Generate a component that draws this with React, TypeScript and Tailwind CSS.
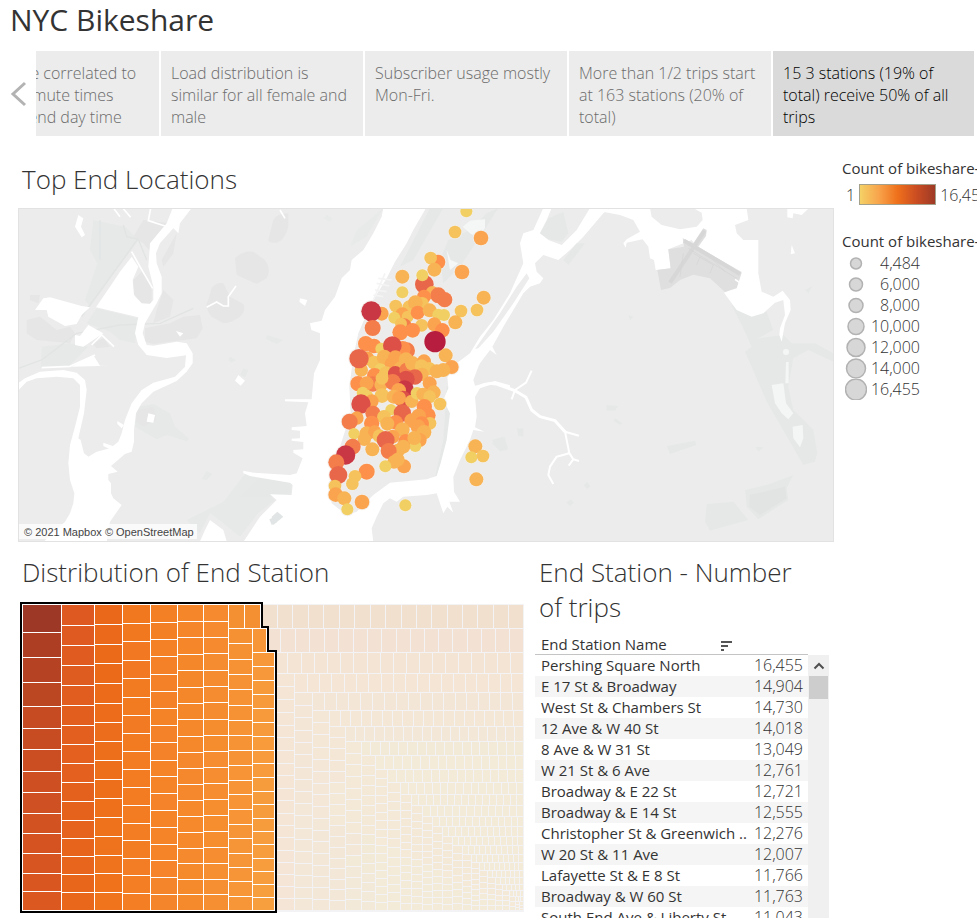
import React from "react";

type Dot = [number, number, number, string];

const Y1 = "#f1cf63";
const Y2 = "#f5c25c";
const O1 = "#f8b355";
const O2 = "#fba450";
const O3 = "#fd914c";
const R1 = "#f47d4c";
const R2 = "#e8674a";
const R3 = "#dc5048";
const R4 = "#c93644";
const R5 = "#b71d3e";

const storyPoints: { lines: string[]; active?: boolean }[] = [
  { lines: ["Usage are correlated to", "with commute times", "for weekend day time"] },
  { lines: ["Load distribution is", "similar for all female and", "male"] },
  { lines: ["Subscriber usage mostly", "Mon-Fri."] },
  { lines: ["More than 1/2 trips start", "at 163 stations (20% of", "total)"] },
  { lines: ["15 3 stations (19% of", "total) receive 50% of all", "trips"], active: true },
];

const stations: [string, string][] = [
  ["Pershing Square North", "16,455"],
  ["E 17 St & Broadway", "14,904"],
  ["West St & Chambers St", "14,730"],
  ["12 Ave & W 40 St", "14,018"],
  ["8 Ave & W 31 St", "13,049"],
  ["W 21 St & 6 Ave", "12,761"],
  ["Broadway & E 22 St", "12,721"],
  ["Broadway & E 14 St", "12,555"],
  ["Christopher St & Greenwich ..", "12,276"],
  ["W 20 St & 11 Ave", "12,007"],
  ["Lafayette St & E 8 St", "11,766"],
  ["Broadway & W 60 St", "11,763"],
  ["South End Ave & Liberty St", "11,043"],
];

const sizes: [string, number][] = [
  ["4,484", 6],
  ["6,000", 7],
  ["8,000", 7.5],
  ["10,000", 8.5],
  ["12,000", 9.5],
  ["14,000", 10],
  ["16,455", 11],
];

const dots: Dot[] = [
  [679, 34, 16, Y1], [645, 96, 17, Y2], [723, 114, 20, O2], [594, 186, 20, O3], [572, 174, 17, Y2],
  [583, 209, 19, O1], [666, 216, 20, O2], [487, 230, 19, O1], [553, 253, 26, R2], [547, 226, 16, Y1],
  [487, 277, 16, Y1], [577, 278, 18, O1], [595, 286, 22, R1], [614, 299, 21, R1], [552, 290, 19, O3],
  [731, 293, 19, O1], [711, 330, 17, Y2], [663, 333, 17, Y2], [646, 367, 19, O1], [547, 310, 17, Y2],
  [425, 341, 19, O2], [394, 334, 28, R4], [398, 384, 22, R1], [467, 318, 17, Y2], [508, 322, 19, Y2],
  [526, 308, 20, O1], [487, 343, 19, O2], [503, 350, 16, Y2], [533, 338, 19, O3], [463, 353, 16, Y1], [569, 331, 19, O1],
  [595, 344, 16, Y1], [612, 345, 16, Y1], [545, 376, 17, Y2], [583, 373, 19, O2], [607, 391, 20, O3],
  [492, 378, 21, R1], [483, 371, 16, Y2], [481, 397, 22, O3], [518, 391, 20, O3], [377, 431, 21, O3],
  [402, 438, 20, O3], [500, 452, 23, R1], [488, 447, 22, O3], [424, 446, 16, Y1], [457, 437, 26, R3],
  [585, 425, 30, R5], [617, 466, 19, O1], [382, 475, 19, O2], [364, 510, 18, O1], [402, 488, 19, Y2],
  [357, 476, 27, R2], [433, 472, 21, O1], [466, 473, 20, O2], [498, 479, 20, O1], [421, 508, 16, Y1],
  [455, 491, 19, O2], [404, 527, 21, O3], [438, 520, 19, Y2], [482, 505, 19, O1], [466, 520, 20, R3],
  [500, 510, 20, R1], [517, 490, 20, O1], [552, 484, 19, O2], [544, 498, 18, Y2], [568, 506, 18, Y2],
  [635, 501, 19, O2], [610, 510, 19, O1], [590, 514, 19, O1], [546, 523, 18, O1], [525, 531, 21, R2],
  [498, 538, 24, R3], [569, 550, 19, O2], [354, 551, 21, O3], [398, 552, 21, R1], [380, 550, 19, O2],
  [423, 554, 18, O1], [458, 546, 22, R1], [426, 535, 17, Y2], [494, 568, 25, R4], [476, 571, 20, O2],
  [368, 578, 16, Y1], [382, 587, 15, Y1], [426, 587, 20, Y2], [461, 590, 19, O1], [488, 597, 23, R3],
  [477, 594, 19, O2], [515, 604, 18, O1], [531, 580, 17, Y1], [549, 583, 18, O1], [581, 577, 19, O1],
  [569, 590, 17, Y2], [600, 612, 17, Y2], [395, 604, 19, O2], [363, 612, 27, R3], [399, 640, 21, R1],
  [453, 629, 15, Y1], [487, 639, 24, R2], [553, 620, 21, O3], [351, 654, 18, O2], [329, 665, 22, R1],
  [432, 651, 19, Y2], [395, 670, 21, O3], [467, 667, 20, O3], [442, 671, 19, O1], [564, 646, 21, O3],
  [536, 648, 20, O2], [515, 662, 20, O2], [570, 670, 17, Y2], [545, 671, 20, O3], [534, 680, 20, O2],
  [487, 689, 20, O1], [552, 697, 20, O1], [342, 701, 15, Y1], [380, 701, 20, O1], [404, 696, 18, O2],
  [373, 718, 18, O1], [418, 708, 18, Y2], [458, 710, 19, O2], [437, 720, 25, R2], [539, 720, 19, O2],
  [497, 724, 20, O3], [526, 738, 16, Y1], [523, 714, 19, O1], [338, 740, 22, R1], [397, 748, 19, O1],
  [474, 752, 19, O1], [490, 740, 19, O1], [446, 753, 22, R1], [317, 765, 27, R4], [289, 787, 22, R1],
  [492, 799, 19, O2], [462, 786, 18, O1], [473, 779, 19, O1], [436, 799, 16, Y1], [380, 815, 22, O3],
  [295, 825, 25, R2], [345, 829, 17, Y2], [337, 851, 17, Y2], [285, 858, 17, Y2], [287, 884, 20, O2],
  [313, 895, 19, O1], [366, 906, 20, O2], [322, 928, 16, Y1], [496, 916, 16, Y1], [706, 739, 19, O1],
  [694, 772, 16, Y1], [729, 768, 17, Y2], [709, 838, 19, O1],
];

function StationMap() {
  return (
    <svg viewBox="0 0 2448 1002" className="block h-auto w-full" role="img" aria-label="Map of top end locations">
      <rect width="2448" height="1002" fill="#ececec" />
      {/* New Jersey meadows and rivers */}
      <g transform="translate(-24 -24)">
        <g fill="#e7e9e9">
          <path d="M250 60 345 80 385 120 240 320 225 300 262 190 240 150Z" />
          <path d="M260 325 385 355 375 430 330 420 300 395 230 370Z" />
          <path d="M95 440 180 430 235 440 175 500 92 505Z" />
          <path d="M380 620 430 612 480 640 495 680 537 716 530 724 470 705 440 718 375 680Z" />
          <path d="M710 815 810 845 848 850 842 885 780 885 795 900 745 940 690 1010 640 970 600 940 570 1000 530 960 640 905Z" />
          <path d="M770 405 820 420 800 432 768 418Z M700 505 716 510 706 532 690 525Z M660 470 678 480 665 488 655 480Z M575 838 590 812 608 822 590 840Z" />
        </g>
        <g fill="#e6e6e6">
          <path d="M400 60 480 70 460 110 425 160 400 130 370 110Z" />
          <path d="M455 180 500 100 490 160 460 200Z M440 330 460 270 490 300 480 350 430 370Z" />
          <path d="M370 240 400 210 425 260 425 310 390 315 370 280Z" />
          <path d="M405 385 480 370 520 350 570 345 578 385 560 415 430 432 405 425Z" />
          <path d="M50 360 90 350 140 390 180 380 195 400 180 430 80 420 50 400Z M60 285 90 285 85 310 60 300Z" />
          <path d="M245 430 280 415 300 440 260 445Z M380 630 430 620 440 660 400 680 378 665Z" />
          <path d="M790 60Q800 40 835 40V80Q825 120 800 128 775 130 775 120Z M675 175Q700 150 730 155L765 180Q785 210 770 235L740 252 680 225Z" />
          <path d="M605 265Q620 245 640 250L660 290 700 312Q710 330 690 350 660 370 640 370L605 350Q580 320 595 300Z" />
        </g>
        <g stroke="#e2e4e4" strokeWidth="4" fill="none">
          <path d="M385 115 215 350M25 505 95 480 200 400 330 375 450 370 550 325M270 60V180M340 75 350 110 385 118 410 180" />
        </g>
        <path
          fill="#fff"
          d="M488 24 470 70 420 130 415 200 430 260 430 300 385 350 375 400 385 435 410 465 470 474 528 466 525 500 495 530 430 548 395 570 365 610 345 660 335 700 325 725 300 745 260 755 235 770 222 760 212 720 205 715 222 640 230 570 225 540 200 518 160 510 90 515 45 535 24 550V572L50 545 80 535 140 530 190 535 210 555 210 620 195 680 180 735 175 790 180 840 193 880 190 910 180 940 165 965 100 1026H290L300 965 335 915 310 895 303 880V850L295 840V822L323 815 303 798 345 762 365 755 372 725V690L378 640 395 610 430 575 500 543 530 515 548 490V460L530 430 500 425 430 437 410 435 398 400 405 370 440 310 455 280V230L440 190 438 160 450 130 490 85 505 100 510 70 545 24Z"
        />
        <g fill="#fff">
          <path d="M365 170 385 200 368 240 372 285 395 310 425 312 385 352 258 322 310 245 330 215Z" />
          <path d="M120 292 215 318 240 322 215 345 200 372 165 378 115 350 110 330 75 330 100 295Z" />
          <path d="M195 405 210 408 235 375 280 400 220 440 195 435Z M185 500 250 465 270 497 295 497Z" />
          <path d="M205 45 220 55 213 80 225 105 215 112 195 80Z M685 525 705 542 692 557 675 542Z M870 295 892 300 885 318 868 305Z" />
          <path d="M415 640 435 645 430 668 410 665Z M280 728 315 740 300 748 280 738Z M322 663 342 675 335 685 322 672Z M498 393 520 400 510 410Z M600 960 640 990 650 1024 570 1024 585 990Z" />
        </g>
        <g stroke="#fff" strokeWidth="5" fill="none">
          <path d="M590 322 620 306 640 318 655 318 655 290 678 258M245 435 275 405 312 440M95 503 180 499 255 465M422 24 415 62 465 78M810 30 825 55M312 26 330 50M340 26 362 52M365 155 390 200 428 265" />
        </g>
      </g>
      {/* Hudson, harbor and East River */}
      <g transform="translate(666 -24)">
        <g fill="#e6e8e8">
          <path d="M570 24 610 24 520 180 480 200Z M625 120 690 90 740 40 775 24 720 110 660 200 610 250 600 180Z" />
          <path d="M620 560 632 560 630 700 600 830 585 830 610 720Z" />
          <path d="M755 720 790 710 805 745 780 755Z M0 890 60 830 150 850 155 880 90 890Z" />
          <path d="M430 24 380 110 330 140 350 90Z M260 45 278 55 270 65 250 55Z" opacity=".6" />
        </g>
        <path
          fill="#fff"
          d="M430 24 425 50 400 100 370 150 335 180 330 210 305 235 285 290 255 330 245 362 210 370 214 390 240 400 240 480 222 520 215 598 135 598 135 604 205 607 195 640 200 678 155 682V690L180 692 180 715 155 716V722L190 726 190 748 160 750V758L188 775 170 820 150 825 40 818 10 812V820L30 828 150 848 158 855 155 885 90 883 110 900 60 950 10 1026H400L395 985 410 950 430 910 450 895 470 905 490 890 560 885 590 880 610 940 622 920 640 938 628 905 660 905 642 875 640 830 660 780 690 720 700 690 733 695 705 682 710 650 705 590 720 565 765 550 810 570V556L765 543 705 557 700 540 715 500 720 490 750 450 770 465 757 440 790 380 850 280 870 260 900 250 910 235 890 215 885 190 910 165 955 180 990 150 1030 110 1090 40 1110 24H1050L1010 90 965 135 925 120 900 100 920 60 935 24H910L880 90 850 100 840 130 850 190 810 280 760 360 720 410 690 460 650 490 622 530 625 565 610 600 630 640 620 720 602 790 590 828 560 838 450 848 400 885 350 935 320 945 275 910 268 850 285 790 300 740 332 640 328 560 340 470 355 400 372 360 400 300 440 235 465 185 500 130 520 90 558 24Z"
        />
        <path fill="#ececec" d="M705 447 780 340 830 260 860 220 868 235 820 310 760 395 715 445Z" />
        <path fill="#f5f7f7" d="M668 80 690 62 735 58 735 85 710 112 690 100Z M620 150 632 180 655 190 630 210Z" />
        <path fill="#e2e5e5" d="M95 950 112 935 130 950 100 975Z M88 958 105 950 110 968 95 975Z" />
        <path stroke="#f4f4f4" strokeWidth="5" fill="none" d="M435 220 400 300M455 240 415 235M448 258 410 250M440 275 405 270M430 290 400 285" />
      </g>
      {/* Queens, the airport and the bays */}
      <g transform="translate(1386 -24)">
        <g fill="#e6e8e8">
          <path d="M180 100 205 55 250 35 265 100 245 125 205 118Z M250 180 290 130 315 130 265 195Z" />
          <path d="M755 315 860 335 880 390 835 415 910 405 935 430 1005 430 1060 460V485L985 450 940 475 925 560 940 630 1000 690 1012 760 1005 785 970 795 860 605 795 455 815 440 785 375Z" />
          <path d="M680 912 760 905 805 960 690 992 675 965Z M795 870 860 855 940 825 920 865 925 900 835 958 800 920Z" />
          <path d="M560 738 645 722 650 735 570 762Z M380 615 415 618 405 632 380 632Z M405 655 428 670 420 675 400 662Z M35 730 75 712 82 750 60 752Z" />
          <path d="M110 685 130 685 130 710 115 708Z M310 855 322 845 332 860 320 866Z M260 908 272 898 282 908 270 918Z M445 345 460 350 450 362Z M975 270 998 258 985 280Z M825 740 850 742 835 755Z" />
        </g>
        <path
          fill="#fff"
          d="M360 34 400 24H800L805 60 765 75 770 100 790 120 835 120 835 220 845 275 880 290 908 272 930 300 932 330 915 370 905 425 898 405 900 385 915 345 910 300 885 308 850 340 815 350 770 330 732 278 770 260 785 215 650 140 635 120 565 148 572 205 527 210 522 180 510 175 505 140 488 118 440 128 437 143 430 130 440 118 480 95 460 60 420 45Z"
        />
        <path fill="#ececec" d="M510 24 515 50 545 75 600 88 650 80 668 60 665 38 640 24Z" />
        <path fill="#dfdfdf" d="M532 210 572 205 565 148 612 140 608 115 640 130 670 85 680 90 678 108 655 140 785 218 770 265 735 276 690 235 640 224 600 240 570 264 543 270Z" />
        <path stroke="#d7d7d7" strokeWidth="12" fill="none" d="M612 122 780 222M674 92 570 248" />
        <path stroke="#d5d5d5" strokeWidth="2" fill="none" d="M625 145 770 235M640 160 700 195 690 220M660 170 650 195M700 180 735 215M610 160 600 230" />
        <path stroke="#fff" strokeWidth="5" fill="none" d="M765 238 800 262 815 288" />
        <path fill="#e0e0e0" opacity=".6" d="M810 885 915 860 920 895 840 945 808 920Z" />
        <path fill="#f4f6f6" d="M875 555 910 550 918 610 940 640 925 658 905 640 885 610Z M938 680 968 675 970 715 960 742 940 715Z M918 486H926V550H916Z" />
        <circle cx="918" cy="456" r="9" fill="#f4f6f6" />
        <path fill="#fff" d="M922 26H985L965 45 940 40 938 55 922 52Z M935 135 945 160 932 163Z" />
        <g stroke="#fff" fill="none" strokeLinejoin="round">
          <path strokeWidth="9" d="M-15 568Q15 545 50 552L105 572 138 592 155 630 180 650 225 662 255 695" />
          <path strokeWidth="6" d="M95 598 105 570 138 548 155 512M255 695 297 707M255 695 268 760 230 770 210 800 205 825 220 852M265 755 280 778 297 783M280 778 266 797" />
        </g>
      </g>
      <g transform="translate(666 -24)">
        <g fill="#f3efe9" opacity=".8">
          {dots.map(([x, y, r], i) => (
            <circle key={i} cx={x} cy={y} r={r + 5} />
          ))}
        </g>
        {dots.map(([x, y, r, c], i) => (
          <circle key={i} cx={x} cy={y} r={r + 2} fill={c} />
        ))}
      </g>
      <rect x="1.5" y="1.5" width="2445" height="999" fill="none" stroke="#e2e2e2" strokeWidth="3" />
    </svg>
  );
}

type Cell = { x: number; y: number; w: number; h: number; fill: string };

function mix(a: number[], b: number[], t: number) {
  return `rgb(${a.map((v, i) => Math.round(v + (b[i] - v) * t)).join(",")})`;
}

/* Splits a length into n whole-pixel parts that shrink linearly by the given ratio. */
function split(start: number, end: number, n: number, ratio: number) {
  const weights = Array.from({ length: n }, (_, i) => 1 - ((1 - ratio) * i) / Math.max(1, n - 1));
  const total = weights.reduce((s, v) => s + v, 0);
  const edges = [start];
  let sum = 0;
  weights.forEach((v) => {
    sum += v;
    edges.push(Math.round(start + ((end - start) * sum) / total));
  });
  return edges;
}

const BOTTOM = 309;
const RIGHT = 504;

function column(x: number, x2: number, edges: number[], from: number[], to: number[]): Cell[] {
  return edges.slice(1).map((e, i) => ({
    x, y: edges[i], w: x2 - x - 1, h: e - edges[i] - 1,
    fill: mix(from, to, i / Math.max(1, edges.length - 2)),
  }));
}

function row(y: number, y2: number, edges: number[], fill: string): Cell[] {
  return edges.slice(1).map((e, i) => ({ x: edges[i], y, w: e - edges[i] - 1, h: y2 - y - 1, fill }));
}

const firstColumn = [3, 31, 56, 81, 105, 127, 148, 170, 191, 212, 232, 252, 272, 290, 309];

const selected: Cell[] = [
  ...column(3, 42, firstColumn.slice(0, 2), [158, 56, 38], [158, 56, 38]),
  ...column(3, 42, firstColumn.slice(1, 5), [174, 62, 35], [186, 70, 34]),
  ...column(3, 42, firstColumn.slice(4), [198, 74, 34], [219, 88, 33]),
  ...column(42, 75, split(3, BOTTOM, 16, 0.86), [221, 89, 33], [233, 103, 27]),
  ...column(75, 103, split(3, BOTTOM, 16, 0.92), [234, 104, 26], [240, 116, 28]),
  ...column(103, 131, split(3, BOTTOM, 17, 0.92), [242, 120, 32], [243, 126, 36]),
  ...column(131, 158, split(3, BOTTOM, 18, 0.94), [244, 128, 38], [245, 133, 42]),
  ...column(158, 184, split(3, BOTTOM, 19, 0.93), [245, 134, 42], [245, 138, 45]),
  ...column(184, 209, split(3, BOTTOM, 19, 0.95), [245, 139, 46], [246, 143, 49]),
  ...row(3, 27, [209, 225, 241], "#f59032"),
  ...column(209, 233, split(27, BOTTOM, 19, 0.92), [246, 145, 51], [246, 150, 56]),
  ...row(27, 51, [233, 247], "#f69638"),
  ...column(233, 255, split(51, BOTTOM, 19, 0.92), [247, 153, 58], [247, 158, 62]),
];

function buildFaded(): Cell[] {
  const out: Cell[] = [
    ...row(3, 27, split(242, RIGHT, 17, 0.97), "#f2e0cf"),
    ...row(27, 51, split(247, RIGHT, 18, 0.97), "#f3e1d3"),
    ...row(51, 72, split(255, RIGHT, 19, 0.97), "#f4e4d3"),
    ...column(256, 275, split(72, BOTTOM, 19, 0.92), [244, 229, 212], [244, 229, 214]),
  ];
  const xs = [275, 293, 310, 326, 342, 356, 368, 381, 392, 403, 413, 423, 433, 443, 452, 460, 468, 476, 483, 490, 496, 500];
  const ys = [72, 91, 109, 125, 140, 154, 168, 181, 193, 204, 215, 225, 235, 244, 253, 261, 269, 276, 283, 289, 295, 300, 304];
  xs.forEach((x, i) => {
    const t = Math.min(1, i / 5);
    const shade = mix([244, 229, 213], [243, 234, 216], t);
    const step = Math.max(3, (ys[i + 1] - ys[i]) * 0.64);
    out.push(...row(ys[i], ys[i + 1], split(x, RIGHT, Math.max(1, Math.round((RIGHT - x) / step)), 0.92), shade));
    const x2 = xs[i + 1] ?? RIGHT;
    const n = Math.max(1, Math.round((BOTTOM - ys[i + 1]) / Math.max(2.5, (x2 - x) * 0.69)));
    out.push(...column(x, x2, split(ys[i + 1], BOTTOM, n, 0.92), [244, 230 + t * 3, 214], [243, 231 + t * 3, 216]));
  });
  return out;
}

const faded = buildFaded();

function Treemap() {
  return (
    <svg viewBox="0 0 504 312" className="block h-auto w-full" role="img" aria-label="Distribution of end station" shapeRendering="crispEdges">
      <path d="M242 2H504V310H256V50H248V26H242Z" fill="#f3f3f5" />
      {faded.map((c, i) => (
        <rect key={i} x={c.x} y={c.y} width={c.w} height={c.h} fill={c.fill} />
      ))}
      <path d="M1 2H242V26H248V50H256V311H1Z" fill="#fff" />
      {selected.map((c, i) => (
        <rect key={i} x={c.x} y={c.y} width={c.w} height={c.h} fill={c.fill} />
      ))}
      <path d="M1 1H242V25H248V49H256V310H1Z" fill="none" stroke="#000" strokeWidth="2" />
    </svg>
  );
}

const heading = "text-[26px] font-light leading-[35px] text-[#333]";

export default function App() {
  return (
    <div className="flex h-screen flex-col overflow-hidden bg-white font-['Open_Sans','Noto_Sans',sans-serif] text-[15px] text-[#333]">
      <h1 className="h-[51px] shrink-0 pl-[10px] text-[30px] font-normal leading-[40px]">NYC Bikeshare</h1>

      <nav aria-label="Story points" className="flex shrink-0 pr-[3px]">
        <button type="button" aria-label="Previous story point" className="flex w-9 shrink-0 items-center pl-[10px]">
          <svg width="18" height="26" viewBox="0 0 18 26" fill="none" stroke="#b3b3b3" strokeWidth="3">
            <path d="M15 2 3 13 15 24" />
          </svg>
        </button>
        <div className="flex flex-1 justify-end gap-[2px] overflow-hidden">
          {storyPoints.map((p) => (
            <button
              key={p.lines[0]}
              type="button"
              className={
                p.active
                  ? "h-[85px] w-[201px] shrink-0 bg-[#dadada] pl-[10px] pt-[11px] text-left text-[16px] font-light leading-[22px] text-black"
                  : "h-[85px] w-[202px] shrink-0 bg-[#ececec] pl-[10px] pt-[11px] text-left text-[16px] font-light leading-[22px] text-[#6b6b6b]"
              }
            >
              <span className="block h-full">
                {p.lines.map((l) => (
                  <span key={l} className="block whitespace-nowrap">
                    {l}
                  </span>
                ))}
              </span>
            </button>
          ))}
        </div>
      </nav>

      <div className="flex min-h-0 flex-1 pl-[18px]">
        <main className="flex min-w-0 flex-1 flex-col">
          <section>
            <h2 className={`${heading} pl-1 pt-[26px] pb-[11px]`}>Top End Locations</h2>
            <div className="relative">
              <StationMap />
              <p className="absolute bottom-[3px] left-px bg-white/75 pl-[5px] pr-[3px] pt-[2px] font-['Liberation_Sans',sans-serif] text-[11px] leading-[13px] text-[#444]">
                © 2021 Mapbox © OpenStreetMap
              </p>
            </div>
          </section>

          <div className="flex pt-[13px]">
            <section className="min-w-0 flex-1 pl-[2px]">
              <h2 className={`${heading} pb-3 pl-[2px]`}>Distribution of End Station</h2>
              <Treemap />
            </section>

            <section className="ml-[11px] mr-[5px] w-[294px] shrink-0">
              <h2 className={`${heading} pl-1`}>
                End Station - Number
                <br />
                of trips
              </h2>
              <div className="flex pt-2">
                <table className="w-[273px] table-fixed border-separate border-spacing-0">
                  <thead>
                    <tr className="h-[22px]">
                      <th scope="col" colSpan={2} className="border-b border-[#c4c4c4] p-0 pl-[6px] pt-[2px] text-left font-normal leading-[19px]">
                        <span className="flex items-center justify-between pr-[75px]">
                          End Station Name
                          <button type="button" aria-label="Sort by number of trips">
                            <svg width="12" height="12" viewBox="0 0 12 12" fill="#555">
                              <path d="M0 2h11v2H0zM0 6h7v2H0zM0 10h3v2H0z" />
                            </svg>
                          </button>
                        </span>
                      </th>
                    </tr>
                  </thead>
                  <tbody>
                    {stations.map(([name, trips]) => (
                      <tr key={name} className="h-[21px] even:bg-[#f5f5f5]">
                        <th scope="row" className="w-[213px] whitespace-nowrap p-0 pb-px pl-[6px] text-left font-normal leading-[20px]">
                          {name}
                        </th>
                        <td className="w-[60px] p-0 pb-px pr-[5px] text-right text-[16px] font-light leading-[20px]">{trips}</td>
                      </tr>
                    ))}
                  </tbody>
                </table>
                <div className="mt-[22px] flex w-[21px] flex-col items-center bg-[#f0f0f0]">
                  <button type="button" aria-label="Scroll up" className="flex h-[21px] w-full items-center justify-center">
                    <svg width="12" height="8" viewBox="0 0 12 8" fill="none" stroke="#505050" strokeWidth="2">
                      <path d="M1.500 6.500 6 2 10.500 6.500" />
                    </svg>
                  </button>
                  <div className="h-[23px] w-[19px] bg-[#cdcdcd]" />
                </div>
              </div>
            </section>
          </div>
        </main>

        <aside className="w-[143px] shrink-0 overflow-hidden whitespace-nowrap pl-2 pt-[22px]">
          <h3 className="leading-[21px]">Count of bikeshare-trips</h3>
          <div className="flex h-[31px] items-center gap-1 pl-1 text-[16px] font-light">
            <span>1</span>
            <div className="h-[21px] w-[77px] shrink-0 border border-[#a3a08c] bg-[linear-gradient(90deg,#f4d166,#f8a44c_25%,#ef701b_50%,#cb4d22_75%,#9e3a26)]" />
            <span>16,455</span>
          </div>
          <h3 className="pt-[21px] leading-[21px]">Count of bikeshare-trips</h3>
          <ul className="pt-px">
            {sizes.map(([label, r]) => (
              <li key={label} className="flex h-[21px] items-center pl-[3px] text-[16px] font-light leading-[21px]">
                <svg width="22" height="21" viewBox="0 0 22 21" className="shrink-0">
                  <circle cx="11" cy="10.500" r={r - 0.500} fill="#d7d7d7" stroke="#b2b2b2" strokeWidth="1.500" />
                </svg>
                <span className="w-[53px] text-right">{label}</span>
              </li>
            ))}
          </ul>
        </aside>
      </div>
    </div>
  );
}
